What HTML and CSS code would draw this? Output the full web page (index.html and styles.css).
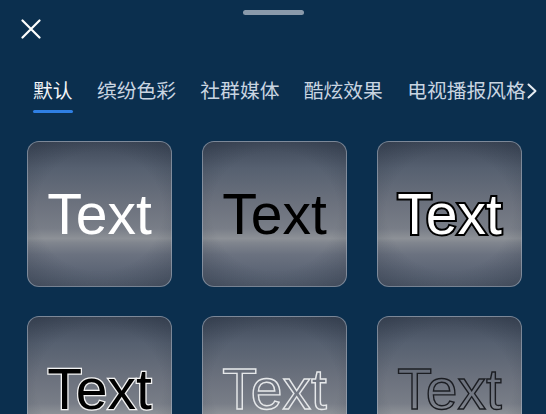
FILE: index.html
```html
<!DOCTYPE html>
<html lang="zh-CN">
<head>
<meta charset="utf-8">
<title>Text styles</title>
<link rel="stylesheet" href="styles.css">
</head>
<body>
<div class="sheet">
  <div class="handle"></div>
  <button class="close" aria-label="关闭">
    <svg width="20" height="20" viewBox="0 0 20 20"><path d="M1.5 1.5 L18.5 18.5 M18.5 1.5 L1.5 18.5" stroke="#fff" stroke-width="2.2" stroke-linecap="round" fill="none"/></svg>
  </button>
  <div class="tabbar">
    <div class="tabs">
      <div class="tab active">默认</div>
      <div class="tab">缤纷色彩</div>
      <div class="tab">社群媒体</div>
      <div class="tab">酷炫效果</div>
      <div class="tab">电视播报风格</div>
    </div>
    <svg class="more" width="10" height="16" viewBox="0 0 10 16"><path d="M1.5 1.5 L8.5 8 L1.5 14.5" stroke="#e6ecf2" stroke-width="2" stroke-linecap="round" stroke-linejoin="round" fill="none"/></svg>
  </div>
  <div class="grid">
    <div class="card"><span class="sample s-white">Text</span></div>
    <div class="card"><span class="sample s-black">Text</span></div>
    <div class="card"><span class="sample s-white-outline">Text</span></div>
    <div class="card"><span class="sample s-black-outline">Text</span></div>
    <div class="card"><span class="sample s-hollow-light">Text</span></div>
    <div class="card"><span class="sample s-hollow-dark">Text</span></div>
  </div>
</div>
</body>
</html>
```
FILE: styles.css
```css
html, body {
  margin: 0;
  padding: 0;
}
body {
  width: 546px;
  height: 414px;
  overflow: hidden;
  background: #0b2f4e;
  font-family: "Noto Sans CJK SC", "Noto Sans", sans-serif;
}
.sheet {
  display: flex;
  flex-direction: column;
}
.handle {
  width: 61px;
  height: 5px;
  border-radius: 3px;
  background: #8a9aab;
  margin: 10px auto 0;
}
.close {
  margin: 4px 0 0 21px;
  padding: 0;
  width: 20px;
  height: 20px;
  border: 0;
  background: none;
  display: block;
  align-self: flex-start;
}
.close svg { display: block; }
.tabbar {
  position: relative;
  margin-top: 37px;
  height: 40px;
}
.tabs {
  display: flex;
  gap: 24.3px;
  padding-left: 33px;
  white-space: nowrap;
}
.tab {
  font-size: 19.8px;
  line-height: 28px;
  color: #c9d5e1;
  position: relative;
}
.tab.active {
  color: #f4f6f8;
}
.tab.active::after {
  content: "";
  position: absolute;
  left: 0;
  right: 0;
  top: 33.5px;
  height: 3px;
  border-radius: 2px;
  background: #2f7fe3;
}
.more {
  position: absolute;
  left: 527px;
  top: 7px;
}
.grid {
  margin-top: 25px;
  padding-left: 27px;
  display: grid;
  grid-template-columns: repeat(3, 145px);
  column-gap: 30px;
  row-gap: 29px;
}
.card {
  height: 146px;
  box-sizing: border-box;
  border-radius: 12px;
  border: 1px solid rgba(170, 182, 198, 0.55);
  background:
    radial-gradient(ellipse 80% 75% at 50% 48%, rgba(0,0,0,0) 55%, rgba(15,25,40,0.32) 100%),
    linear-gradient(to bottom, #3f4959 0%, #566070 18%, #6b717d 42%, #787d87 60%, #8d9197 67%, #80858e 70%, #6b7280 78%, #5c6575 90%, #535d6d 100%);
  display: flex;
  align-items: center;
  justify-content: center;
}
.sample {
  font-family: "Liberation Sans", Arial, sans-serif;
  font-size: 57px;
  letter-spacing: 0;
  line-height: normal;
}
.s-white { color: #ffffff; }
.s-black { color: #000000; }
.s-white-outline {
  color: #ffffff;
  -webkit-text-stroke: 4px #000;
  paint-order: stroke fill;
}
.s-black-outline {
  color: #000000;
  -webkit-text-stroke: 2.5px #f2f2f2;
  paint-order: stroke fill;
}
.s-hollow-light {
  color: transparent;
  -webkit-text-stroke: 1.4px #e6e8ea;
}
.s-hollow-dark {
  color: transparent;
  -webkit-text-stroke: 1.4px #1b1d22;
}
```
